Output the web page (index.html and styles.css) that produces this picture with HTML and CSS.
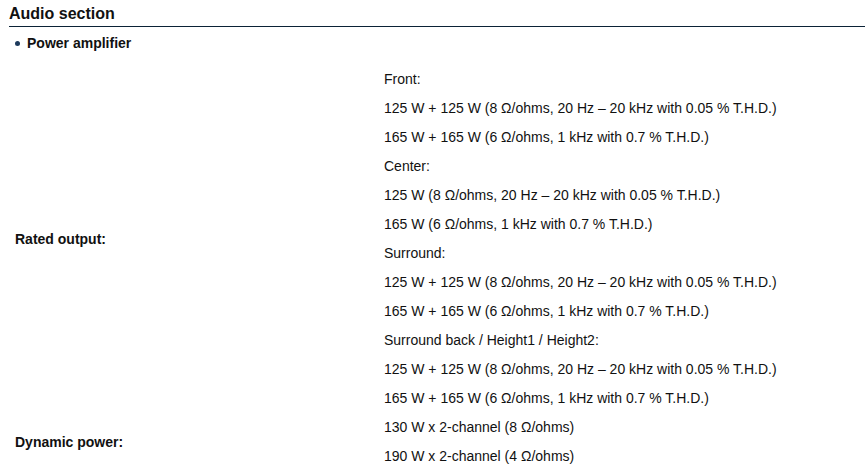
FILE: index.html
```html
<!DOCTYPE html>
<html>
<head>
<meta charset="utf-8">
<link rel="stylesheet" href="styles.css">
</head>
<body>
<div class="page">
  <h2 class="section-title">Audio section</h2>
  <h3 class="sub-title"><span class="bullet"></span>Power amplifier</h3>
  <div class="spec">
    <div class="spec-row">
      <div class="label">Rated output:</div>
      <div class="values">
        <p>Front:</p>
        <p>125 W + 125 W (8 Ω/ohms, 20 Hz – 20 kHz with 0.05 % T.H.D.)</p>
        <p>165 W + 165 W (6 Ω/ohms, 1 kHz with 0.7 % T.H.D.)</p>
        <p>Center:</p>
        <p>125 W (8 Ω/ohms, 20 Hz – 20 kHz with 0.05 % T.H.D.)</p>
        <p>165 W (6 Ω/ohms, 1 kHz with 0.7 % T.H.D.)</p>
        <p>Surround:</p>
        <p>125 W + 125 W (8 Ω/ohms, 20 Hz – 20 kHz with 0.05 % T.H.D.)</p>
        <p>165 W + 165 W (6 Ω/ohms, 1 kHz with 0.7 % T.H.D.)</p>
        <p>Surround back / Height1 / Height2:</p>
        <p>125 W + 125 W (8 Ω/ohms, 20 Hz – 20 kHz with 0.05 % T.H.D.)</p>
        <p>165 W + 165 W (6 Ω/ohms, 1 kHz with 0.7 % T.H.D.)</p>
      </div>
    </div>
    <div class="spec-row">
      <div class="label">Dynamic power:</div>
      <div class="values">
        <p>130 W x 2-channel (8 Ω/ohms)</p>
        <p>190 W x 2-channel (4 Ω/ohms)</p>
      </div>
    </div>
  </div>
</div>
</body>
</html>
```
FILE: styles.css
```css
html, body {
  margin: 0;
  padding: 0;
  background: #ffffff;
}
body {
  font-family: "Liberation Sans", Arial, sans-serif;
  color: #111111;
}
.page {
  padding-left: 9px;
}
.section-title {
  margin: 0;
  padding: 5px 0 3px 0;
  font-size: 16px;
  line-height: 18px;
  font-weight: bold;
  color: #111111;
  border-bottom: 1px solid #0b2236;
}
.sub-title {
  margin: 6px 0 0 0;
  padding-left: 6px;
  display: flex;
  align-items: center;
  font-size: 14px;
  line-height: 20px;
  font-weight: bold;
  color: #111111;
}
.bullet {
  width: 5px;
  height: 5px;
  border-radius: 50%;
  background: #1d3a5c;
  margin-right: 7px;
}
.spec {
  margin-top: 12px;
  margin-left: 6px;
}
.spec-row {
  display: grid;
  grid-template-columns: 369px 1fr;
  align-items: center;
}
.label {
  font-size: 14px;
  font-weight: bold;
  color: #111111;
}
.values p {
  margin: 0;
  font-size: 14px;
  line-height: 29px;
  color: #111111;
}
```
